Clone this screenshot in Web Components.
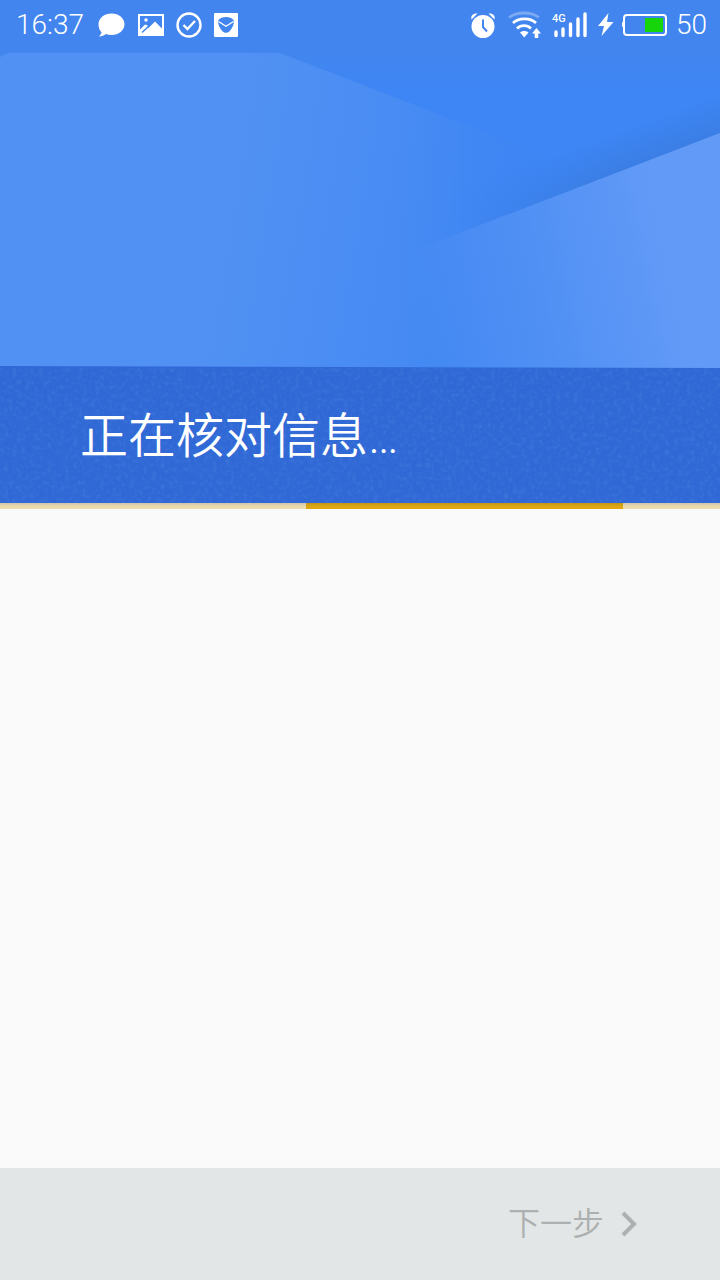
<!DOCTYPE html>
<html lang="zh-CN">
<head>
<meta charset="utf-8">
<meta name="viewport" content="width=device-width, initial-scale=1">
<title>正在核对信息</title>
<style>
    body {
        margin: 0;
        font-family: Roboto, "Noto Sans CJK SC", sans-serif;
        background-color: #fafafa;
    }
</style>
</head>
<body>
<setup-screen>
    <status-bar slot="status" time="16:37" battery="50"></status-bar>
    <setup-header slot="header">正在核对信息…</setup-header>
    <loading-bar slot="progress"></loading-bar>
    <nav-bar slot="footer">下一步</nav-bar>
</setup-screen>

<script>
class SetupScreen extends HTMLElement {
    constructor() {
        super();
        this.attachShadow({ mode: 'open' });
        this.shadowRoot.innerHTML = `
            <style>
                :host {
                    display: flex;
                    flex-direction: column;
                    min-height: 100vh;
                }

                main {
                    flex: 1;
                }
            </style>
            <slot name="status"></slot>
            <slot name="header"></slot>
            <slot name="progress"></slot>
            <main><slot></slot></main>
            <slot name="footer"></slot>
        `;
    }
}

class StatusBar extends HTMLElement {
    constructor() {
        super();
        this.attachShadow({ mode: 'open' });
        this.shadowRoot.innerHTML = `
            <style>
                :host {
                    display: flex;
                    align-items: center;
                    justify-content: space-between;
                    height: 50px;
                    padding: 0 13px 0 16px;
                    color: #fff;
                    background-color: #4285ee;
                    font-size: 28px;
                    font-weight: 300;
                    line-height: 50px;
                }

                .group {
                    display: flex;
                    align-items: center;
                    gap: 12px;
                }

                .group.right {
                    gap: 8px;
                }

                svg {
                    display: block;
                    fill: currentColor;
                }
            </style>
            <div class="group">
                <span class="time"></span>
                <svg width="30" height="28" viewBox="0 0 30 28" aria-hidden="true">
                    <path d="M15.500 2.500C22.700 2.500 28.500 7.200 28.500 13.200S22.700 24 15.500 24c-2 0-3.900-.4-5.500-1-1.800 1.500-4.200 2.300-7.200 2.500 1.500-1.100 2.400-2.500 2.700-4.200C3.500 19.200 2.500 16.400 2.500 13.200c0-6 5.800-10.700 13-10.700z"/>
                </svg>
                <svg width="26" height="24" viewBox="0 0 26 24" aria-hidden="true">
                    <path fill-rule="evenodd" d="M0 1h26v22H0zM2 3v13.500l5-5 3.500 3.500 6.500-6.500 7 7V3z"/>
                    <circle cx="8" cy="7" r="1.700"/>
                    <path d="M2 11h4.500L2 16z" fill="#4285ee"/>
                    <path d="M2 17.500l6-6 2 1.500-5.500 5.500z"/>
                    <path d="M4 19.500l6.500-6" fill="none" stroke="#4285ee" stroke-width="1.500"/>
                </svg>
                <svg width="26" height="26" viewBox="0 0 26 26" aria-hidden="true">
                    <circle cx="13" cy="13" r="11.500" fill="none" stroke="currentColor" stroke-width="2.400"/>
                    <path d="M7.500 13l4 4 7.500-8" fill="none" stroke="currentColor" stroke-width="2.400"/>
                </svg>
                <svg width="24" height="24" viewBox="0 0 24 24" aria-hidden="true">
                    <rect width="24" height="24" rx="1"/>
                    <path d="M4.200 7.500C6 4.800 9 4 12 4s6 .8 7.800 3.500c.5 3.500-1.300 7.500-4 10.500-2 2.400-5.600 2.400-7.600 0-2.700-3-4.500-7-4-10.500z" fill="#4285ee"/>
                    <path d="M4.500 8.500l7.500 4.800 7.500-4.800" fill="none" stroke="currentColor" stroke-width="1.200"/>
                </svg>
            </div>
            <div class="group right">
                <svg width="32" height="28" viewBox="0 0 32 28" aria-hidden="true">
                    <path d="M3.500 8.500C2.500 4.500 5 2 9.500 2.500zM26.500 8.500c1-4-1.500-6.500-6-6z"/>
                    <circle cx="15" cy="15.500" r="11.500"/>
                    <path d="M15 8.500v7.500l4 4.500" fill="none" stroke="#4285ee" stroke-width="2"/>
                </svg>
                <svg width="34" height="28" viewBox="0 0 34 28" aria-hidden="true">
                    <g fill="none" stroke="currentColor" stroke-width="2.800">
                        <path d="M1 6.500c8-6 22-6 30 0" opacity=".3"/>
                        <path d="M5 12c6-5.500 17-5.500 23 0M9 17.500c4-3.800 10-3.800 14 0"/>
                    </g>
                    <path d="M12 21.500c2.500-2 6-2 8.500 0L16.300 26.500z"/>
                    <path d="M28.500 17l4.500 5.500h-2.700V27h-3.600v-4.500H24z"/>
                </svg>
                <svg width="38" height="28" viewBox="0 0 38 28" aria-hidden="true">
                    <text x="2" y="11" font-family="Roboto, sans-serif" font-size="11" font-weight="500">4G</text>
                    <g fill="none" stroke="currentColor" stroke-width="3.400" stroke-linecap="round">
                        <path d="M6 21v3.500M13 18v6.500M20.500 13v11.500M28 8v16.500M35 3v21.500"/>
                    </g>
                </svg>
                <svg width="18" height="24" viewBox="0 0 18 24" aria-hidden="true">
                    <path d="M12.500 0L2 13h6L5.500 23 17.500 9h-6.500z"/>
                </svg>
                <svg width="46" height="24" viewBox="0 0 46 24" aria-hidden="true">
                    <rect x="2" y="2" width="42" height="20" rx="3" fill="none" stroke="currentColor" stroke-width="2"/>
                    <rect x="0" y="9" width="2" height="5" rx="1"/>
                    <rect x="23" y="5" width="18" height="14" fill="#17d50b"/>
                </svg>
                <span class="battery"></span>
            </div>
        `;
        this.shadowRoot.querySelector('.time').textContent = this.getAttribute('time');
        this.shadowRoot.querySelector('.battery').textContent = this.getAttribute('battery');
    }
}

class SetupHeader extends HTMLElement {
    constructor() {
        super();
        this.attachShadow({ mode: 'open' });
        this.shadowRoot.innerHTML = `
            <style>
                :host {
                    display: block;
                    background-color: #3069d6;
                }

                .art {
                    display: block;
                    width: 100%;
                    height: 318px;
                }

                .band {
                    display: grid;
                    height: 135px;
                }

                .grain,
                h1 {
                    grid-area: 1 / 1;
                }

                .grain {
                    width: 100%;
                    height: 100%;
                }

                h1 {
                    align-self: center;
                    margin: 0;
                    padding: 2px 80px 0;
                    color: #fff;
                    font-size: 48px;
                    font-weight: 350;
                    line-height: 64px;
                }
            </style>
            <svg class="art" viewBox="0 50 720 318" preserveAspectRatio="none" aria-hidden="true">
                <defs>
                    <linearGradient id="left" gradientUnits="userSpaceOnUse" x1="225" y1="180" x2="530" y2="230">
                        <stop offset="0" stop-color="#5191f3"/>
                        <stop offset=".5" stop-color="#498cf3"/>
                        <stop offset="1" stop-color="#4186f1"/>
                    </linearGradient>
                    <linearGradient id="right" gradientUnits="userSpaceOnUse" x1="400" y1="270" x2="660" y2="215">
                        <stop offset="0" stop-color="#488bf2" stop-opacity="0"/>
                        <stop offset=".2" stop-color="#488bf3"/>
                        <stop offset=".5" stop-color="#5090f4"/>
                        <stop offset="1" stop-color="#629af7"/>
                    </linearGradient>
                    <linearGradient id="base" gradientUnits="userSpaceOnUse" x1="0" y1="50" x2="0" y2="90">
                        <stop offset="0" stop-color="#4285ee"/>
                        <stop offset="1" stop-color="#3e86f5"/>
                    </linearGradient>
                    <linearGradient id="fade" gradientUnits="userSpaceOnUse" x1="400" y1="100" x2="560" y2="100">
                        <stop offset="0" stop-color="#fff"/>
                        <stop offset="1" stop-color="#000"/>
                    </linearGradient>
                    <mask id="edge" maskUnits="userSpaceOnUse" x="0" y="50" width="720" height="320">
                        <rect y="50" width="720" height="320" fill="url(#fade)"/>
                    </mask>
                    <linearGradient id="rise" gradientUnits="userSpaceOnUse" x1="460" y1="100" x2="600" y2="100">
                        <stop offset="0" stop-color="#000"/>
                        <stop offset="1" stop-color="#fff"/>
                    </linearGradient>
                    <mask id="depth" maskUnits="userSpaceOnUse" x="0" y="50" width="720" height="320">
                        <rect y="50" width="720" height="320" fill="url(#rise)"/>
                    </mask>
                    <linearGradient id="shade" gradientUnits="userSpaceOnUse" x1="640" y1="164" x2="627" y2="129">
                        <stop offset="0" stop-color="#3b7ee4"/>
                        <stop offset="1" stop-color="#3b7ee4" stop-opacity="0"/>
                    </linearGradient>
                </defs>
                <rect y="50" width="720" height="320" fill="url(#base)"/>
                <path d="M0 57l8-4h272l290 112v203H0z" fill="url(#left)" mask="url(#edge)"/>
                <path d="M420 250L720 135V60L420 180z" fill="url(#shade)" mask="url(#depth)"/>
                <path d="M410 252L720 133v235H375z" fill="url(#right)"/>
                <path d="M0 366l720 2v2H0z" fill="#3069d6"/>
            </svg>
            <div class="band">
                <svg class="grain" aria-hidden="true">
                    <filter id="noise" x="0" y="0" width="100%" height="100%">
                        <feTurbulence type="fractalNoise" baseFrequency=".23" numOctaves="4" seed="4"/>
                        <feColorMatrix values="0 0 0 0 .45  0 0 0 0 .6  0 0 0 0 .95  1.2 0 0 0 -.56"/>
                    </filter>
                    <rect width="100%" height="100%" filter="url(#noise)" opacity=".2"/>
                </svg>
                <h1><slot></slot></h1>
            </div>
        `;
    }
}

class LoadingBar extends HTMLElement {
    constructor() {
        super();
        this.attachShadow({ mode: 'open' });
        this.shadowRoot.innerHTML = `
            <style>
                :host {
                    display: block;
                }

                .track {
                    display: grid;
                    grid-template-columns: 306fr 317fr 97fr;
                    height: 6px;
                    background: linear-gradient(#cfc5ad, #e9d8ab 50%, #f0deae);
                }

                .segment {
                    grid-column: 2;
                    background: linear-gradient(#c1961d, #dca511 50%, #e0a911);
                }
            </style>
            <div class="track" role="progressbar" aria-label="正在核对信息">
                <div class="segment"></div>
            </div>
        `;
    }
}

class NavBar extends HTMLElement {
    constructor() {
        super();
        this.attachShadow({ mode: 'open' });
        this.shadowRoot.innerHTML = `
            <style>
                :host {
                    display: flex;
                    justify-content: flex-end;
                    height: 112px;
                    padding: 0 80px;
                    background-color: #e2e6e6;
                }

                button {
                    display: flex;
                    align-items: center;
                    gap: 16px;
                    padding: 0;
                    border: 0;
                    background: none;
                    color: #adb0b0;
                    font: inherit;
                    font-size: 32px;
                    font-weight: 350;
                    line-height: 40px;
                }

                svg {
                    fill: none;
                    stroke: currentColor;
                    stroke-width: 4;
                }
            </style>
            <button type="button" disabled>
                <slot></slot>
                <svg width="20" height="26" viewBox="0 0 20 26" aria-hidden="true">
                    <path d="M3 2l11 11L3 24"/>
                </svg>
            </button>
        `;
    }
}

customElements.define('setup-screen', SetupScreen);
customElements.define('status-bar', StatusBar);
customElements.define('setup-header', SetupHeader);
customElements.define('loading-bar', LoadingBar);
customElements.define('nav-bar', NavBar);
</script>
</body>
</html>
